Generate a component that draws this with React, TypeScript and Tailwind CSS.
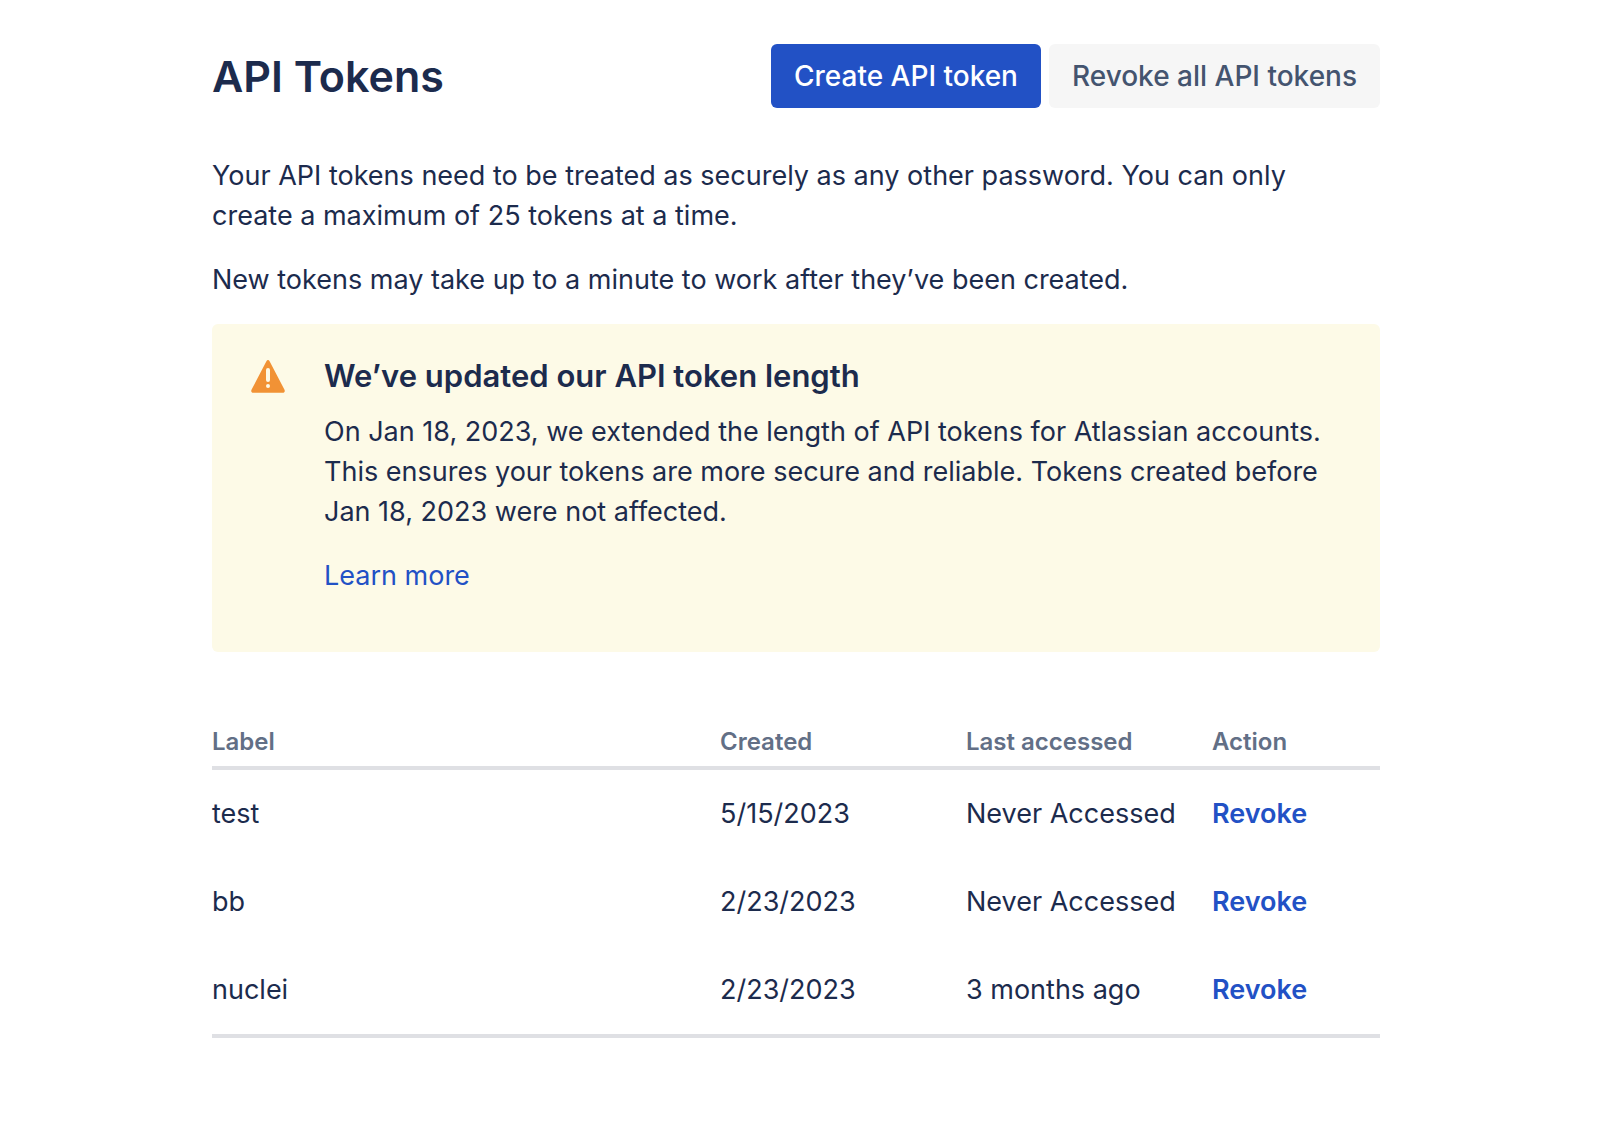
const tokens = [
  { label: "test", created: "5/15/2023", accessed: "Never Accessed" },
  { label: "bb", created: "2/23/2023", accessed: "Never Accessed" },
  { label: "nuclei", created: "2/23/2023", accessed: "3 months ago" },
];

function WarningIcon() {
  return (
    <svg viewBox="0 4 48 48" className="size-12 shrink-0" aria-hidden="true">
      <path
        fill="#f19235"
        fillRule="evenodd"
        d="M25.600 9.200 40.500 37.800c.7 1.500-.1 2.900-1.700 2.900H9.200c-1.600 0-2.400-1.400-1.700-2.900L22.400 9.200c.8-1.500 2.400-1.500 3.200 0ZM24 16a2 2 0 0 0-2 2v10a2 2 0 0 0 4 0V18a2 2 0 0 0-2-2Zm0 16a2 2 0 1 0 0 4 2 2 0 0 0 0-4Z"
      />
    </svg>
  );
}

export default function App() {
  return (
    <main className="min-h-screen bg-white pt-11 pr-[222px] pb-11 pl-[212px] font-['Inter',sans-serif] text-[27px] leading-10 text-[#1c2b4d]">
      <header className="flex items-center justify-between">
        <h1 className="text-[43px] leading-16 font-semibold whitespace-nowrap">API Tokens</h1>
        <div className="flex gap-2 text-[28px] font-medium whitespace-nowrap">
          <button type="button" className="h-16 rounded-md bg-[#2251c5] px-[23px] text-white">
            Create API token
          </button>
          <button type="button" className="h-16 rounded-md bg-[#f6f6f6] px-[23px] text-[#44546f]">
            Revoke all API tokens
          </button>
        </div>
      </header>

      <div className="mt-12 space-y-6 pr-8">
        <p>
          Your API tokens need to be treated as securely as any other password. You can only create
          a maximum of 25 tokens at a time.
        </p>
        <p>New tokens may take up to a minute to work after they’ve been created.</p>
      </div>

      <section className="mt-6 flex gap-8 rounded-md bg-[#fdfae7] p-8">
        <WarningIcon />
        <div>
          <h2 className="text-[31px] leading-10 font-semibold">We’ve updated our API token length</h2>
          <p className="mt-4">
            On Jan 18, 2023, we extended the length of API tokens for Atlassian accounts. This
            ensures your tokens are more secure and reliable. Tokens created before Jan 18, 2023
            were not affected.
          </p>
          <p className="my-6">
            <a href="#learn-more" className="text-[#2251c5]">
              Learn more
            </a>
          </p>
        </div>
      </section>

      <table className="mt-[70px] w-full table-fixed border-separate border-spacing-0 border-b-4 border-[#dfe0e4] text-left whitespace-nowrap">
        <thead className="text-[24px] leading-10 text-[#626f86]">
          <tr>
            <th scope="col" className="border-b-4 border-[#dfe0e4] pb-1 font-semibold">Label</th>
            <th scope="col" className="w-[246px] border-b-4 border-[#dfe0e4] pb-1 font-semibold">Created</th>
            <th scope="col" className="w-[246px] border-b-4 border-[#dfe0e4] pb-1 font-semibold">Last accessed</th>
            <th scope="col" className="w-[168px] border-b-4 border-[#dfe0e4] pb-1 font-semibold">Action</th>
          </tr>
        </thead>
        <tbody>
          {tokens.map((token) => (
            <tr key={token.label} className="h-[88px]">
              <td>{token.label}</td>
              <td>{token.created}</td>
              <td>{token.accessed}</td>
              <td>
                <button type="button" className="font-semibold text-[#2251c5]">
                  Revoke
                </button>
              </td>
            </tr>
          ))}
        </tbody>
      </table>
    </main>
  );
}
